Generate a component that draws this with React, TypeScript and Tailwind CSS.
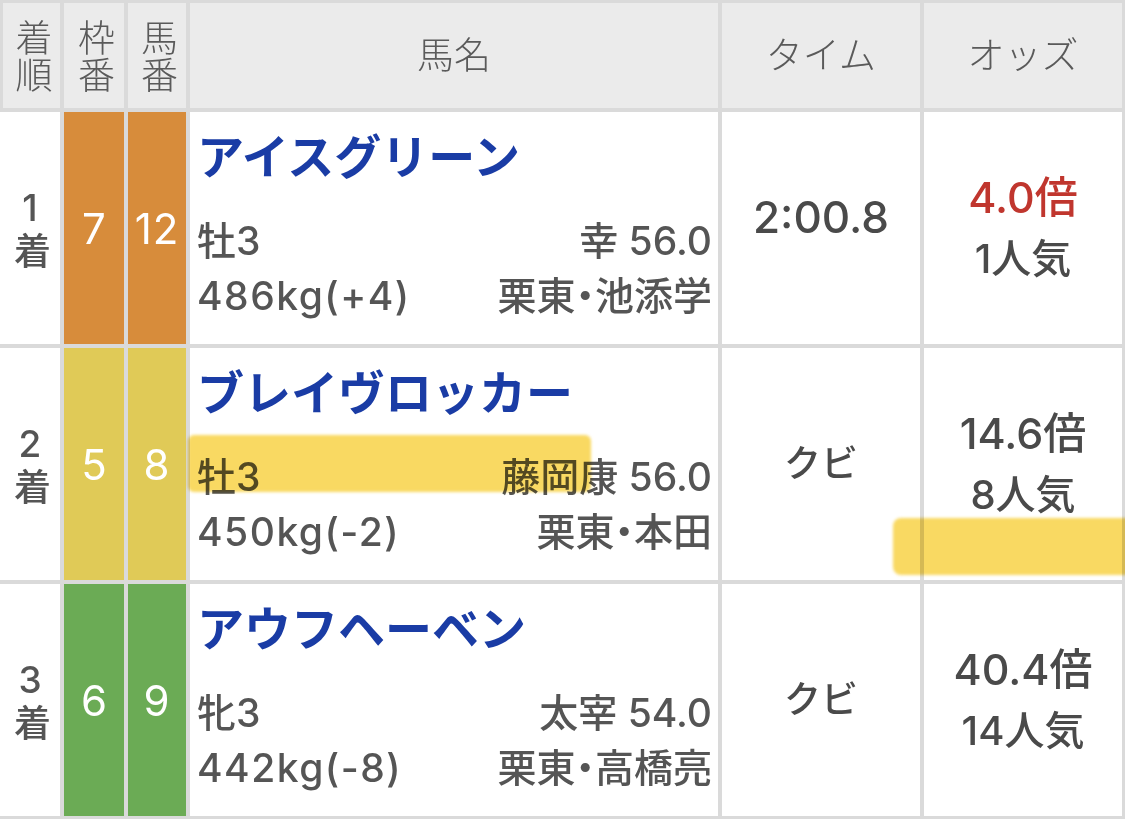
const font = { fontFamily: 'Inter, "Noto Sans CJK JP", "Noto Sans", sans-serif' };

type Result = {
  rank: string;
  waku: string;
  uma: string;
  color: string;
  name: string;
  sexAge: string;
  jockey: string;
  weight: string;
  stable: string;
  trainer: string;
  time: string;
  odds: string;
  pop: string;
  favorite?: boolean;
};

const results: Result[] = [
  {
    rank: '1',
    waku: '7',
    uma: '12',
    color: 'bg-[#d78c3b]',
    name: 'アイスグリーン',
    sexAge: '牡3',
    jockey: '幸 56.0',
    weight: '486kg(+4)',
    stable: '栗東',
    trainer: '池添学',
    time: '2:00.8',
    odds: '4.0倍',
    pop: '1人気',
    favorite: true,
  },
  {
    rank: '2',
    waku: '5',
    uma: '8',
    color: 'bg-[#e0ca57]',
    name: 'ブレイヴロッカー',
    sexAge: '牡3',
    jockey: '藤岡康 56.0',
    weight: '450kg(-2)',
    stable: '栗東',
    trainer: '本田',
    time: 'クビ',
    odds: '14.6倍',
    pop: '8人気',
  },
  {
    rank: '3',
    waku: '6',
    uma: '9',
    color: 'bg-[#6bab55]',
    name: 'アウフヘーベン',
    sexAge: '牝3',
    jockey: '太宰 54.0',
    weight: '442kg(-8)',
    stable: '栗東',
    trainer: '高橋亮',
    time: 'クビ',
    odds: '40.4倍',
    pop: '14人気',
  },
];

function HeaderCell({ children, className = '' }: { children: React.ReactNode; className?: string }) {
  return (
    <div
      className={`flex items-center justify-center bg-[#ebebeb] text-[#5a5a5a] font-light ${className}`}
    >
      {children}
    </div>
  );
}

// two-character labels stacked top to bottom
function Stacked({ text, className = '' }: { text: string; className?: string }) {
  return (
    <span className={`leading-none [writing-mode:vertical-rl] [text-orientation:upright] ${className}`}>
      {text}
    </span>
  );
}

export default function App() {
  return (
    <div className="relative w-[1125px] h-[819px] overflow-hidden bg-[#dadada]" style={font}>
      <div className="grid grid-cols-[60px_60px_58px_528px_198px_198px] grid-rows-[105px_232px_232px_232px] gap-[4px] pt-[3px]">
        <HeaderCell className="ml-[3px]">
          <Stacked text="着順" className="text-[37px]" />
        </HeaderCell>
        <HeaderCell>
          <Stacked text="枠番" className="text-[37px]" />
        </HeaderCell>
        <HeaderCell>
          <Stacked text="馬番" className="text-[37px]" />
        </HeaderCell>
        <HeaderCell className="text-[37px]">馬名</HeaderCell>
        <HeaderCell className="text-[37px]">タイム</HeaderCell>
        <HeaderCell className="text-[37px]">オッズ</HeaderCell>

        {results.map((r) => (
          <Row key={r.rank} r={r} />
        ))}
      </div>

      {/* highlighter marks */}
      <div className="absolute left-[188px] top-[435px] h-[57px] w-[403px] rounded-[6px] bg-[#f8d246]/85 mix-blend-multiply blur-[1.5px]" />
      <div className="absolute left-[893px] top-[518px] h-[57px] w-[260px] rounded-[8px] bg-[#f8d246]/85 mix-blend-multiply blur-[1.5px]" />
    </div>
  );
}

function Row({ r }: { r: Result }) {
  return (
    <>
      <div className="flex items-center justify-center bg-white font-medium text-[#555]">
        <Stacked text={`${r.rank}着`} className="text-[37px] tracking-[2px]" />
      </div>
      <div className={`flex items-center justify-center ${r.color} text-[42px] text-white`}>
        {r.waku}
      </div>
      <div className={`flex items-center justify-center ${r.color} text-[42px] tracking-[1px] text-white`}>
        {r.uma}
      </div>
      <div className="flex flex-col bg-white pl-[7px] pr-[6px] text-[#555] font-medium">
        <div className="flex h-[90px] items-center text-[47px] font-bold text-[#1a3ca5]">
          {r.name}
        </div>
        <div className="mt-[12px] flex h-[55px] items-center justify-between text-[39px]">
          <span>{r.sexAge}</span>
          <span>{r.jockey}</span>
        </div>
        <div className="flex h-[55px] items-center justify-between text-[39px]">
          <span className="tracking-[1.5px]">{r.weight}</span>
          <span className="[font-feature-settings:'halt']">
            {r.stable}・{r.trainer}
          </span>
        </div>
      </div>
      <div
        className={`flex items-center justify-center bg-white font-medium text-[#4a4a4a] ${
          r.time.includes(':') ? 'text-[44px] pb-[22px]' : 'text-[37px]'
        }`}
      >
        {r.time}
      </div>
      <div className="flex flex-col items-center justify-center bg-white font-medium">
        <span
          className={`h-[62px] leading-[62px] text-[43px] ${
            r.favorite ? 'text-[#c0362e]' : 'text-[#4a4a4a]'
          }`}
        >
          {r.odds}
        </span>
        <span className="h-[62px] leading-[62px] text-[40px] text-[#4a4a4a]">{r.pop}</span>
      </div>
    </>
  );
}
